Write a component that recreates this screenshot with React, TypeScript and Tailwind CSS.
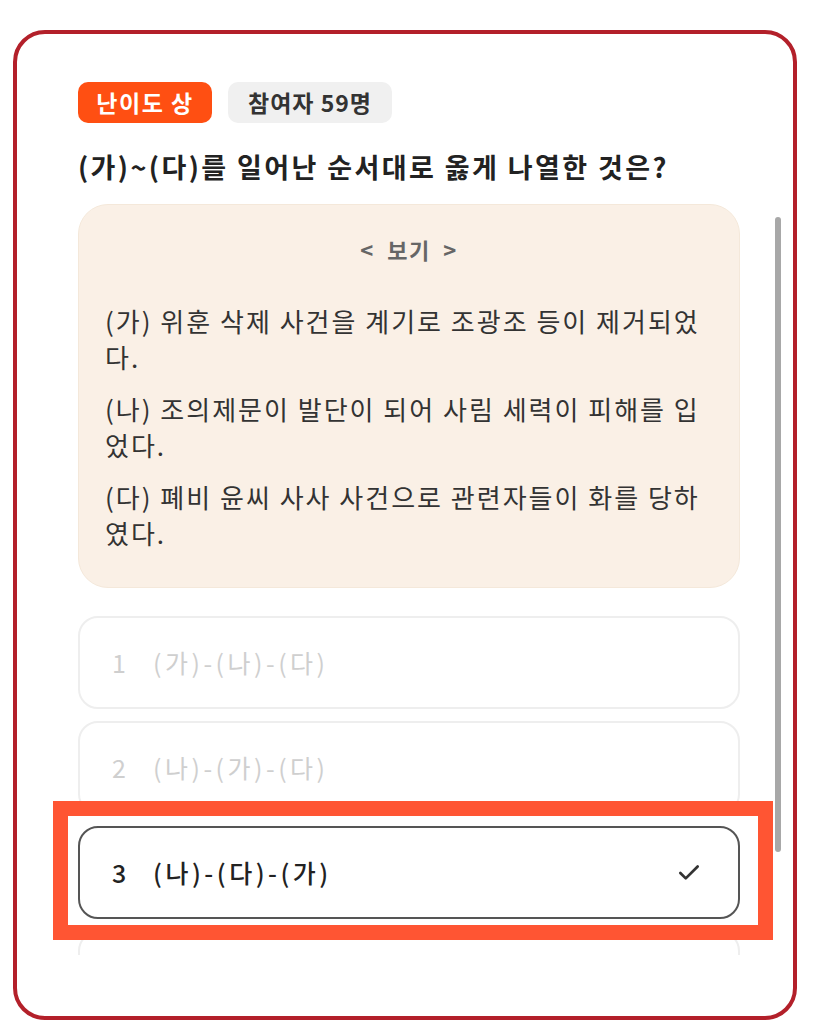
import { Check } from 'lucide-react'

const font = { fontFamily: '"Noto Sans CJK KR", "Noto Sans", sans-serif' }

const clues = [
  '(가) 위훈 삭제 사건을 계기로 조광조 등이 제거되었다.',
  '(나) 조의제문이 발단이 되어 사림 세력이 피해를 입었다.',
  '(다) 폐비 윤씨 사사 사건으로 관련자들이 화를 당하였다.',
]

// 4번 보기는 스크롤 아래로 잘려서 테두리만 보임
const options = [
  { no: 1, text: '(가)-(나)-(다)' },
  { no: 2, text: '(나)-(가)-(다)' },
  { no: 3, text: '(나)-(다)-(가)', selected: true },
  { no: 4, text: '' },
]

function Option({ no, text, selected }: { no: number; text: string; selected?: boolean }) {
  return (
    <div
      className={
        selected
          ? 'flex h-[93px] shrink-0 items-center rounded-[20px] border-2 border-[#555] pl-[32px] pr-[36px] text-[#222]'
          : 'flex h-[93px] shrink-0 items-center rounded-[20px] border-2 border-[#eeeeee] pl-[32px] pr-[36px] text-[#cfcfcf]'
      }
    >
      {text && (
        <>
          <span className={selected ? 'w-[41px] text-[25px] font-medium' : 'w-[41px] text-[25px]'}>{no}</span>
          <span className={selected ? 'text-[25px] font-medium tracking-[3.5px]' : 'text-[25px] tracking-[3.5px]'}>
            {text}
          </span>
        </>
      )}
      {selected && <Check className="ml-auto h-[26px] w-[26px] text-[#333]" strokeWidth={2.5} />}
    </div>
  )
}

export default function App() {
  return (
    <div className="relative h-[1024px] w-[819px] bg-white pt-[30px]" style={font}>
      <div className="ml-[13px] flex h-[990px] w-[784px] flex-col overflow-hidden rounded-[32px] border-[4px] border-[#b3202a]">
        <div className="pl-[61px] pt-[48px]">
          <div className="flex gap-4">
            <span className="flex h-[41px] w-[134px] items-center justify-center rounded-[10px] bg-[#ff4f12] text-[23px] font-bold tracking-[1.5px] text-white">
              난이도 상
            </span>
            <span className="flex h-[41px] w-[164px] items-center justify-center rounded-[10px] bg-[#f0f0f0] text-[23px] font-bold tracking-[1px] text-[#333]">
              참여자 59명
            </span>
          </div>
          <h1 className="mt-[27px] text-[27px] font-bold leading-[34px] tracking-[2.4px] text-[#222]">
            (가)~(다)를 일어난 순서대로 옳게 나열한 것은?
          </h1>
        </div>

        <div className="mt-[20px] flex h-[751px] overflow-hidden">
          <div className="ml-[61px] flex w-[662px] shrink-0 flex-col gap-[12px]">
            <div className="mb-[16px] shrink-0 rounded-[30px] border border-[#f4e8da] bg-[#faf0e6] px-[26px] pb-[36px] pt-[30px]">
              <p className="text-center text-[22px] font-bold leading-[28px] tracking-[1.5px] text-[#666] [word-spacing:6px]">
                &lt; 보기 &gt;
              </p>
              <div className="mt-[40px] flex flex-col gap-[16px]">
                {clues.map((c) => (
                  <p key={c} className="text-[26px] leading-[36px] tracking-[2px] text-[#333]">
                    {c}
                  </p>
                ))}
              </div>
            </div>
            {options.map((o) => (
              <Option key={o.no} {...o} />
            ))}
          </div>
          <div className="ml-[35px] mt-[13px] h-[635px] w-[6px] shrink-0 rounded-full bg-[#a8a8a8]" />
        </div>
      </div>

      <div className="absolute left-[53px] top-[801px] h-[139px] w-[720px] border-[15px] border-[#ff5533]" />
    </div>
  )
}
